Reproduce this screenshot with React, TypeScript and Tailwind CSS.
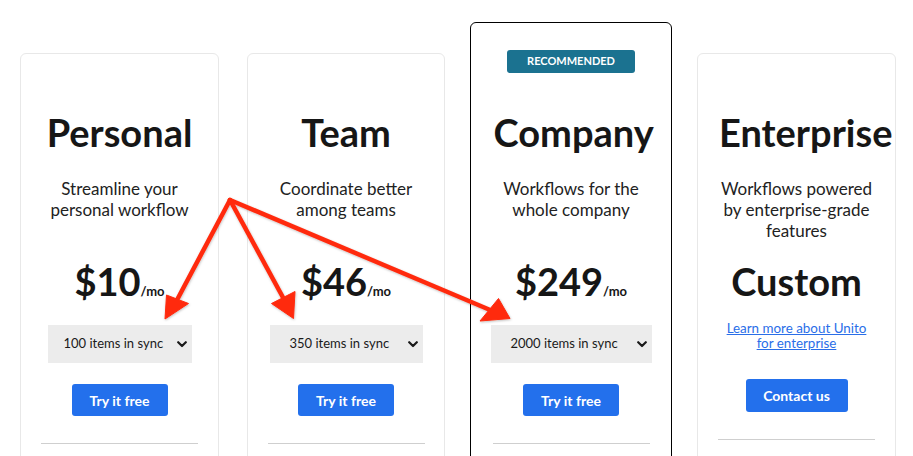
import React from "react";

function Chevron() {
  return (
    <svg width="10" height="7" viewBox="0 0 10 7" className="shrink-0">
      <path d="M1.2 1.2 L5 5 L8.8 1.2" fill="none" stroke="#1a1a1a" strokeWidth="2.2" strokeLinecap="round" strokeLinejoin="round" />
    </svg>
  );
}

type Plan = {
  name: string;
  desc: React.ReactNode;
  price: string;
  sync: string;
  selW: string;
  selPl: string;
};

function Select({ text, w, pl }: { text: string; w: string; pl: string }) {
  return (
    <div className={`mt-[21px] h-[38px] bg-[#ececec] flex items-center justify-between pr-[5px] text-[13px] text-[#1a1a1a] ${w} ${pl}`}>
      <span>{text}</span>
      <Chevron />
    </div>
  );
}

function PlanBody({ p }: { p: Plan }) {
  return (
    <>
      <div className="w-[155px] text-center whitespace-nowrap text-[38px] leading-[1.2] font-bold text-[#161616]">{p.name}</div>
      <div className="mt-[22px] h-[63px] text-[17px] leading-[21px] text-center text-[#222]">{p.desc}</div>
      <div className="mt-[18px] flex items-baseline text-[#161616]">
        <span className="text-[38px] leading-[1.2] font-bold">{p.price}</span>
        <span className="text-[13px] font-bold">/mo</span>
      </div>
      <Select text={p.sync} w={p.selW} pl={p.selPl} />
      <button className="mt-[21px] h-[32px] w-[96px] rounded-[3px] bg-[#2370ec] text-white font-bold text-[14px]">Try it free</button>
      <div className="mt-[27px] w-[157px] h-px bg-[#cfcfcf]" />
    </>
  );
}

export default function App() {
  return (
    <div className="relative w-[913px] h-[456px] overflow-hidden bg-white font-[Lato,sans-serif]">
      <div className="flex items-start pl-[20px]">
        <div className="mt-[53px] w-[199px] h-[500px] rounded-[6px] border border-[#e8e8e8] flex flex-col items-center pt-[56px]">
          <PlanBody
            p={{
              name: "Personal",
              desc: (
                <>
                  Streamline your
                  <br />
                  personal workflow
                </>
              ),
              price: "$10",
              sync: "100 items in sync",
              selW: "w-[144px]",
              selPl: "pl-[16px]",
            }}
          />
        </div>
        <div className="ml-[28px] mt-[53px] w-[198px] h-[500px] rounded-[6px] border border-[#e8e8e8] flex flex-col items-center pt-[56px]">
          <PlanBody
            p={{
              name: "Team",
              desc: (
                <>
                  Coordinate better
                  <br />
                  among teams
                </>
              ),
              price: "$46",
              sync: "350 items in sync",
              selW: "w-[153px]",
              selPl: "pl-[20px]",
            }}
          />
        </div>
        <div className="ml-[25px] mt-[22px] w-[202px] h-[520px] rounded-[6px] border border-black flex flex-col items-center">
          <div className="mt-[27px] h-[23px] w-[128px] rounded-[3px] bg-[#1b7290] text-white font-bold text-[11px] flex items-center justify-center">
            RECOMMENDED
          </div>
          <div className="mt-[37px] flex flex-col items-center">
            <PlanBody
              p={{
                name: "Company",
                desc: (
                  <>
                    Workflows for the
                    <br />
                    whole company
                  </>
                ),
                price: "$249",
                sync: "2000 items in sync",
                selW: "w-[161px]",
                selPl: "pl-[20px]",
              }}
            />
          </div>
        </div>
        <div className="ml-[25px] mt-[53px] w-[199px] h-[500px] rounded-[6px] border border-[#e8e8e8] flex flex-col items-center pt-[56px]">
          <div className="w-[155px] text-left whitespace-nowrap text-[38px] leading-[1.2] font-bold text-[#161616]">Enterprise</div>
          <div className="mt-[22px] h-[63px] text-[17px] leading-[21px] text-center text-[#222]">
            Workflows powered
            <br />
            by enterprise-grade
            <br />
            features
          </div>
          <div className="mt-[18px] text-[38px] leading-[1.2] font-bold text-[#161616]">Custom</div>
          <a className="mt-[17px] text-[13.4px] leading-[15px] underline text-[#2a6ee8] text-center">
            Learn more about Unito
            <br />
            for enterprise
          </a>
          <button className="mt-[28px] h-[33px] w-[102px] rounded-[3px] bg-[#2370ec] text-white font-bold text-[14px]">Contact us</button>
          <div className="mt-[27px] w-[157px] h-px bg-[#cfcfcf]" />
        </div>
      </div>

      <svg className="absolute inset-0 pointer-events-none" width="913" height="456" viewBox="0 0 913 456">
        <defs>
          <filter id="sh" x="-10%" y="-10%" width="120%" height="120%">
            <feDropShadow dx="0.5" dy="1" stdDeviation="1" floodColor="#000" floodOpacity="0.25" />
          </filter>
        </defs>
        <g filter="url(#sh)" fill="#ff2a0e" stroke="#ff2a0e">
          <line x1="230" y1="200" x2="177.5" y2="299" strokeWidth="4.5" strokeLinecap="round" />
          <polygon points="165,319 166.5,295 188.5,303.5" strokeWidth="1" strokeLinejoin="round" />
          <line x1="230" y1="200" x2="283" y2="297.5" strokeWidth="4.5" strokeLinecap="round" />
          <polygon points="293.5,318.5 271.5,303.5 295,291.5" strokeWidth="1" strokeLinejoin="round" />
          <line x1="230" y1="200" x2="489" y2="309.5" strokeWidth="4.5" strokeLinecap="round" />
          <polygon points="510,318.5 480,321 498.5,298.5" strokeWidth="1" strokeLinejoin="round" />
        </g>
      </svg>
    </div>
  );
}
